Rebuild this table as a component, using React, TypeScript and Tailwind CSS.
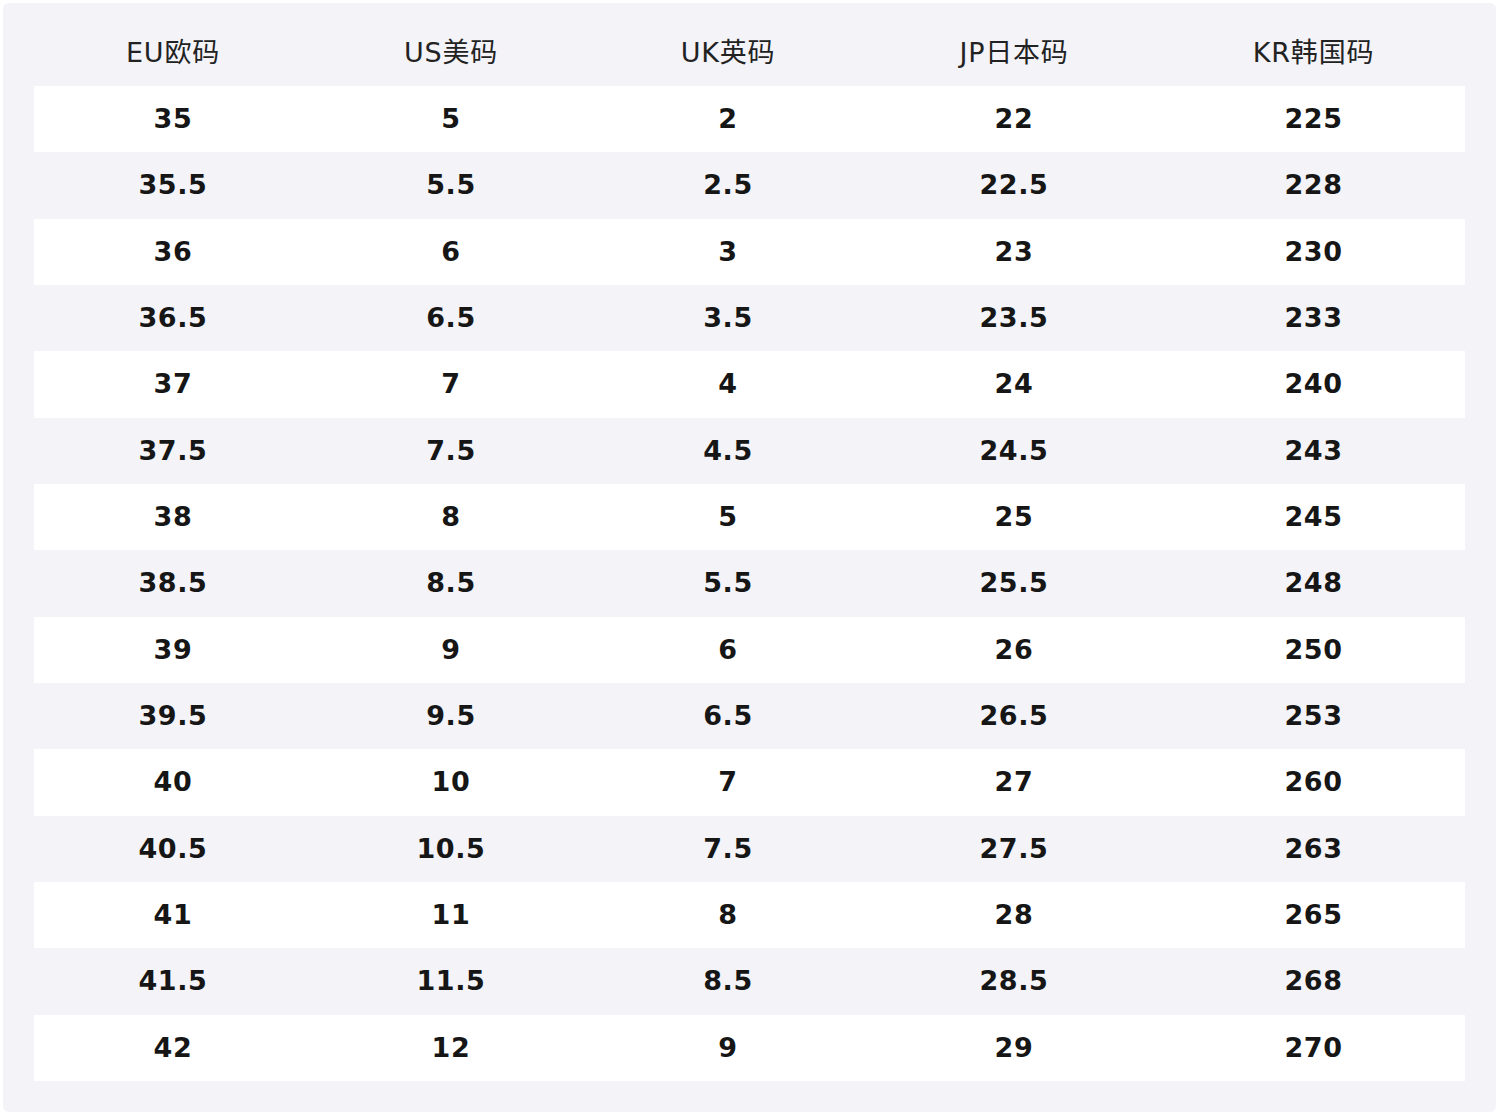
const headers = ["EU欧码", "US美码", "UK英码", "JP日本码", "KR韩国码"];

const rows: string[][] = [
  ["35", "5", "2", "22", "225"],
  ["35.5", "5.5", "2.5", "22.5", "228"],
  ["36", "6", "3", "23", "230"],
  ["36.5", "6.5", "3.5", "23.5", "233"],
  ["37", "7", "4", "24", "240"],
  ["37.5", "7.5", "4.5", "24.5", "243"],
  ["38", "8", "5", "25", "245"],
  ["38.5", "8.5", "5.5", "25.5", "248"],
  ["39", "9", "6", "26", "250"],
  ["39.5", "9.5", "6.5", "26.5", "253"],
  ["40", "10", "7", "27", "260"],
  ["40.5", "10.5", "7.5", "27.5", "263"],
  ["41", "11", "8", "28", "265"],
  ["41.5", "11.5", "8.5", "28.5", "268"],
  ["42", "12", "9", "29", "270"],
];

const cols = "grid grid-cols-[278px_278px_276px_296px_303px]";

export default function App() {
  return (
    <div
      className="min-h-[1116px] w-[1500px] bg-white pt-[3px] pl-[3px] pr-[4px] pb-[4px]"
      style={{ fontFamily: '"DejaVu Sans", "Noto Sans CJK SC", sans-serif' }}
    >
      <div className="rounded-md bg-[#f3f3f8] px-[31px] pb-[31px]">
        {/* header */}
        <div className={`${cols} h-[83px] items-center pt-[18px]`}>
          {headers.map((h) => (
            <div key={h} className="text-center text-[27px] text-[#222] tracking-[0.8px]">
              {h}
            </div>
          ))}
        </div>

        {/* size rows */}
        {rows.map((row, i) => (
          <div
            key={i}
            className={`${cols} h-[66.33px] items-center ${i % 2 === 0 ? "bg-white" : ""}`}
          >
            {row.map((v, j) => (
              <div key={j} className="text-center text-[27px] font-bold text-[#161616] tracking-[0.6px]">
                {v}
              </div>
            ))}
          </div>
        ))}
      </div>
    </div>
  );
}
